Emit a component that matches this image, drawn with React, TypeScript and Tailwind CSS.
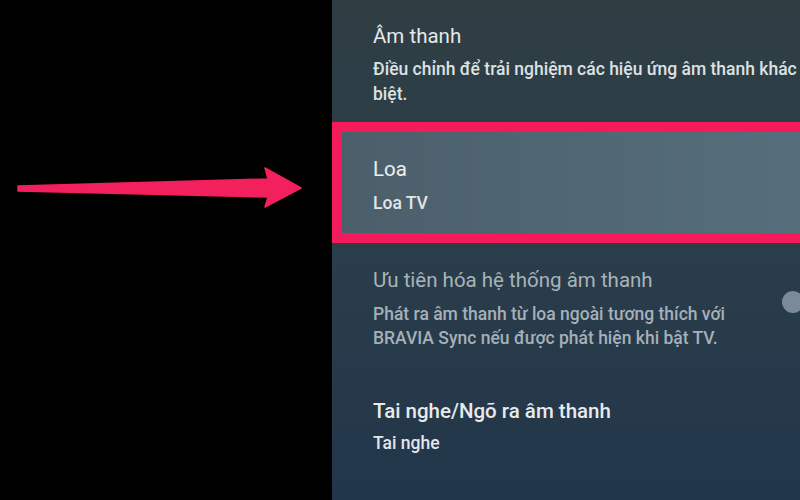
import React from "react";

const font = { fontFamily: "Roboto, 'Noto Sans', 'Liberation Sans', sans-serif" };

export default function App() {
  return (
    <div className="w-[800px] h-[500px] flex bg-black overflow-hidden" style={font}>
      <div className="w-[332px] h-full shrink-0 bg-black">
        <svg width="332" height="500" viewBox="0 0 332 500">
          <polygon
            points="18,186 268,179 265,168 301,188 265,207 268,197 18,191"
            fill="#f2205c"
            stroke="#f2205c"
            strokeWidth="1.5"
            strokeLinejoin="round"
          />
        </svg>
      </div>
      <div className="flex-1 min-w-0 h-full flex flex-col bg-gradient-to-b from-[#2f3e43] via-[#2a3d4a] to-[#22364b]">
        <div className="pl-[41px] pt-[22px]">
          <div className="text-[20.5px] leading-[28px] text-[#e6e8e9] whitespace-nowrap">Âm thanh</div>
          <div className="mt-[7px] text-[17.5px] leading-[25px] font-medium text-[#dde1e3] whitespace-nowrap">
            <div>Điều chỉnh để trải nghiệm các hiệu ứng âm thanh khác</div>
            <div>biệt.</div>
          </div>
        </div>
        <div className="mt-[15px] h-[121px] shrink-0 border-[10px] border-r-0 border-[#f41b5c] bg-gradient-to-r from-[#4b5f6b] to-[#566e7b] pl-[31px] pt-[23px]">
          <div className="text-[20.5px] leading-[28px] text-[#eef0f1]">Loa</div>
          <div className="mt-[8px] text-[17.5px] leading-[25px] font-medium text-[#e3e6e8]">Loa TV</div>
        </div>
        <div className="relative pl-[41px] pt-[23px]">
          <div className="text-[20.5px] leading-[28px] text-[#a9b3ba] whitespace-nowrap">Ưu tiên hóa hệ thống âm thanh</div>
          <div className="mt-[8px] text-[17.5px] leading-[24px] font-medium text-[#a6b0b8] whitespace-nowrap">
            <div>Phát ra âm thanh từ loa ngoài tương thích với</div>
            <div>BRAVIA Sync nếu được phát hiện khi bật TV.</div>
          </div>
          <div className="absolute left-[450px] top-[48px] w-[22px] h-[22px] rounded-full bg-[#7a8a98]" />
        </div>
        <div className="pl-[41px] pt-[47px]">
          <div className="text-[20.5px] leading-[28px] font-medium text-[#e8eaeb] whitespace-nowrap">Tai nghe/Ngõ ra âm thanh</div>
          <div className="mt-[6px] text-[17.5px] leading-[25px] font-medium text-[#e3e6e8]">Tai nghe</div>
        </div>
      </div>
    </div>
  );
}
